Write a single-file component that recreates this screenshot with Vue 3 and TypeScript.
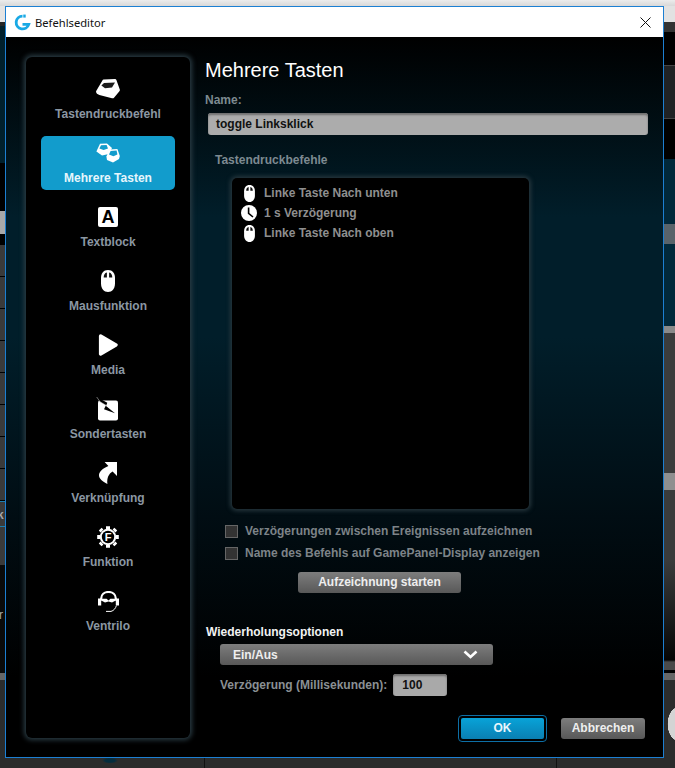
<script setup lang="ts">
type Kind = 'key' | 'multi' | 'text' | 'mouse' | 'play' | 'special' | 'link' | 'gear' | 'head'
interface NavItem { label: string; kind: Kind; active?: boolean }
const nav: NavItem[] = [
  { label: 'Tastendruckbefehl', kind: 'key' },
  { label: 'Mehrere Tasten', kind: 'multi', active: true },
  { label: 'Textblock', kind: 'text' },
  { label: 'Mausfunktion', kind: 'mouse' },
  { label: 'Media', kind: 'play' },
  { label: 'Sondertasten', kind: 'special' },
  { label: 'Verknüpfung', kind: 'link' },
  { label: 'Funktion', kind: 'gear' },
  { label: 'Ventrilo', kind: 'head' },
]
const rows = [
  { label: 'Linke Taste Nach unten', icon: 'mouse' },
  { label: '1 s Verzögerung', icon: 'clock' },
  { label: 'Linke Taste Nach oben', icon: 'mouse' },
]
const checks = ['Verzögerungen zwischen Ereignissen aufzeichnen', 'Name des Befehls auf GamePanel-Display anzeigen']
</script>

<template>
  <div class="stage">
    <span class="behind bk">k</span>
    <span class="behind br">r</span>
    <div class="win">
      <header class="titlebar">
        <svg class="logo" viewBox="0 0 18 18" width="17" height="17">
          <path d="M9 2.2A6.8 6.8 0 1 0 15.6 11H9" fill="none" stroke="#19a9e5" stroke-width="3" />
          <path d="M9.8 .6 H12.4 V3.8 H9.8Z" fill="#19a9e5" />
        </svg>
        <span class="wintitle">Befehlseditor</span>
        <svg class="close" viewBox="0 0 11 11" width="11" height="11">
          <path d="M0.5 0.5 10.5 10.5M10.5 0.5 0.5 10.5" stroke="#111" stroke-width="1" fill="none" />
        </svg>
      </header>

      <div class="content">
        <aside class="side">
          <div v-for="item in nav" :key="item.label" class="nav" :class="{ on: item.active }">
            <div class="ico">
              <svg v-if="item.kind === 'key'" viewBox="0 0 24 20" width="24" height="20">
                <path d="M7.6.6 19 0Q20 0 20.4 1L23.8 10.4Q24.2 11.6 23.2 12.4L18 18.8Q17.2 19.6 16 19.2L3.4 16Q.2 15 0 13Q0 12 .8 11L6.4 1.4Q6.8.7 7.6.6Z" fill="#fff" />
                <path d="M8 4 19 3.6 16 8.6 9 9.2 5.4 6.6Z" fill="#1c1c1c" />
              </svg>
              <svg v-else-if="item.kind === 'multi'" viewBox="0 0 24 20" width="24" height="20">
                <path d="M4 .8 11 .6 16 5 13 11 6 12.4.4 8.6Z" fill="#fff" />
                <path d="M5 2.2 10.6 2 12 5.4 7.6 7 3.4 5.4Z" fill="#129ccc" />
                <path d="M13.6 6.6 21.4 6 23.8 13 23 16 17 19.4 11 17 10.4 13.4Z" fill="#fff" />
                <path d="M14.6 8 20.6 7.6 21.4 11.6 17.4 13.2 13 11.6Z" fill="#129ccc" />
              </svg>
              <div v-else-if="item.kind === 'text'" class="letter">A</div>
              <svg v-else-if="item.kind === 'mouse'" viewBox="0 0 14 22" width="14" height="22">
                <path d="M7 0C11.5 0 14 3.4 14 8V13.5C14 18.6 11 22 7 22S0 18.6 0 13.5V8C0 3.4 2.5 0 7 0Z" fill="#fff" />
                <path d="M5.9 2.6V7.6H2.7C2.7 5 3.7 3 5.9 2.6ZM8.1 2.6C10.3 3 11.3 5 11.3 7.6H8.1Z" fill="#111" />
              </svg>
              <svg v-else-if="item.kind === 'play'" viewBox="0 0 20 22" width="20" height="22">
                <path d="M2.6 2 18 11 2.6 20Z" fill="#fff" stroke="#fff" stroke-width="3.4" stroke-linejoin="round" />
              </svg>
              <svg v-else-if="item.kind === 'special'" viewBox="0 0 24 24" width="24" height="24">
                <rect x="2" y="3.5" width="20" height="20" rx="2" fill="#fff" />
                <path d="M.7 0 11.3 5.7 10 9 19 16.3 8 12.3 10 8.3 4 4.7Z" fill="#000" />
                <path d="M.7 0 4 4.7 10 8.3" fill="none" stroke="#ddd" stroke-width=".5" />
              </svg>
              <svg v-else-if="item.kind === 'link'" viewBox="0 0 18 22" width="18" height="22">
                <path d="M5.6 0H18V14L13.6 9.6C9.6 12 7.8 16 8.4 22 3.4 19.4 0 16.4 0 13.4 0 9.6 3.6 6.4 9.4 4Z" fill="#fff" />
              </svg>
              <svg v-else-if="item.kind === 'gear'" viewBox="0 0 22 22" width="22" height="22">
                <circle cx="11" cy="11" r="8.2" fill="#fff" />
                <path d="M11 3V.2M11 19v2.8M3 11H.2M19 11h2.8M5 5 3.2 3.2M17 5 18.8 3.2M5 17 3.2 18.8M17 17 18.8 18.8" stroke="#fff" stroke-width="4" fill="none" />
                <circle cx="11" cy="11" r="6.2" fill="#000" />
                <text x="11" y="15" text-anchor="middle" class="gear-f">F</text>
              </svg>
              <svg v-else viewBox="0 0 21 21" width="21" height="21">
                <path d="M3.2 9.5V7.6C3.2 3.6 6.2 1 10.5 1S17.8 3.6 17.8 7.6V9.5" fill="none" stroke="#fff" stroke-width="2.2" />
                <path d="M0 7.4H3.2V14.6H0ZM17.8 7.4H21V14.6H17.8Z" fill="#fff" />
                <path d="M3.2 7.8H8.6L10.5 9.4 12.4 7.8H17.8V9.6L14 11.6 10.5 10.4 7 11.6 3.2 9.6Z" fill="#fff" />
                <path d="M18.4 14.6C17.6 17.4 15.8 19.6 13 20.4H8" fill="none" stroke="#fff" stroke-width="1" />
              </svg>
            </div>
            <div class="navlabel">{{ item.label }}</div>
          </div>
        </aside>

        <main class="main">
          <h1 class="h">Mehrere Tasten</h1>
          <div class="name-l">Name:</div>
          <div class="nameinput">toggle Linksklick</div>
          <div class="list-l">Tastendruckbefehle</div>
          <div class="list">
            <div v-for="r in rows" :key="r.label" class="row">
              <span class="rowico">
                <svg v-if="r.icon === 'mouse'" viewBox="0 0 14 22" width="11" height="17">
                  <path d="M7 0C11.5 0 14 3.4 14 8V13.5C14 18.6 11 22 7 22S0 18.6 0 13.5V8C0 3.4 2.5 0 7 0Z" fill="#fff" />
                  <path d="M5.9 2.6V7.6H2.7C2.7 5 3.7 3 5.9 2.6ZM8.1 2.6C10.3 3 11.3 5 11.3 7.6H8.1Z" fill="#111" />
                </svg>
                <svg v-else viewBox="0 0 16 16" width="16" height="16">
                  <circle cx="8" cy="8" r="8" fill="#fff" />
                  <path d="M7.6 2.6V8.4L12 12" fill="none" stroke="#000" stroke-width="1.6" />
                </svg>
              </span>
              <span>{{ r.label }}</span>
            </div>
          </div>
          <label v-for="c in checks" :key="c" class="check">
            <span class="box"></span>
            <span>{{ c }}</span>
          </label>
          <div class="rec btn">Aufzeichnung starten</div>
          <div class="rep-l">Wiederholungsoptionen</div>
          <div class="select">
            <span>Ein/Aus</span>
            <svg viewBox="0 0 15 9" width="15" height="9">
              <path d="M1.5 1.5 7.5 7 13.5 1.5" fill="none" stroke="#fff" stroke-width="2.6" />
            </svg>
          </div>
          <div class="delay">
            <span>Verzögerung (Millisekunden):</span>
            <span class="num">100</span>
          </div>
          <div class="actions">
            <div class="ok"><span>OK</span></div>
            <div class="cancel btn">Abbrechen</div>
          </div>
        </main>
      </div>
    </div>
  </div>
</template>

<style>
html, body { margin: 0; background: #000; }
</style>

<style scoped>
.stage {
  position: relative;
  width: 675px;
  height: 768px;
  box-sizing: border-box;
  padding: 6px 11px 10px 5px;
  overflow: hidden;
  font-family: "Liberation Sans", Arial, sans-serif;
  font-size: 12px;
  background:
    linear-gradient(#ececec, #d8d8d8) 0 0 / 100% 6px no-repeat,
    radial-gradient(ellipse 8px 3px at 50% 50%, #052c3d 60%, transparent 100%) 90px 757px / 40px 7px no-repeat,
    linear-gradient(#111, #111) 204px 757px / 1px 11px no-repeat,
    linear-gradient(#111, #111) 556px 757px / 1px 11px no-repeat,
    linear-gradient(to bottom, #e4e4e4 0 22px, #252525 22px 26px, #01202c 26px 163px, #000 163px 211px, #a9a9a9 211px 234px, #000 234px 245px, transparent 245px, transparent 501px, #1c7fb0 501px 502px, #3a3a3a 502px 526px, #1c7fb0 526px 527px, #3a3a3a 527px 565px, #0a0a0a 565px 673px, #666 673px 680px, #2b2c2c 680px) 0 0 / 5px 100% no-repeat,
    linear-gradient(to bottom, #3a3a3a 0 31px, #000 31px 32px) 0 245px / 5px 32px repeat-y,
    radial-gradient(ellipse 16px 24px at 16px 24px, #d4d4d4 70%, transparent 72%) 663px 700px / 16px 48px no-repeat,
    linear-gradient(to bottom, #e2e2e2 0 22px, #333 22px 32px, #000 32px 65px, #444 65px 66px, #202224 66px 118px, #444 118px 119px, #000 119px 159px, #01283a 159px 224px, #59636a 224px 244px, #01283a 244px 326px, #8a8a8a 326px 333px, #3b3c3c 333px 473px, #8f8f8f 473px 490px, #3a3b3b 490px 560px, #050505 660px, #4a4a4a 662px 670px, #000 670px 673px, #666 673px 680px, #2b2c2c 680px) 663px 0 / 12px 100% no-repeat,
    #2b2c2c;
}
.behind {
  position: absolute;
  left: -3px;
  font-weight: 700;
  color: #a8a8a8;
  line-height: 14px;
}
.bk { top: 508px; }
.br { top: 608px; left: -1px; font-weight: 400; }
.win {
  position: relative;
  width: 100%;
  height: 100%;
  box-sizing: border-box;
  border: 1px solid #1c7fd2;
  display: flex;
  flex-direction: column;
  background: #000;
}
.titlebar {
  height: 30px;
  flex: none;
  background: #fff;
  display: flex;
  align-items: center;
  padding: 0 12px 0 8px;
  box-sizing: border-box;
}
.logo { margin-right: 4px; }
.wintitle { font-family: "Noto Sans", "Liberation Sans", sans-serif; font-size: 11.2px; color: #111; }
.close { margin-left: auto; }
.content {
  flex: 1;
  display: flex;
  padding: 20px 0 0 20px;
  background: linear-gradient(to bottom, #000 0, #011e2a 180px, #011e2a 300px, #010d13 480px, #000 640px);
}
.side {
  width: 164px;
  height: 681px;
  box-sizing: border-box;
  flex: none;
  background: #000;
  border-radius: 6px;
  box-shadow: 0 0 5px 2px #2a3c44;
  padding: 15px 15px 0;
  display: flex;
  flex-direction: column;
  gap: 10px;
}
.nav {
  height: 54px;
  flex: none;
  padding-top: 5px;
  box-sizing: border-box;
  border-radius: 5px;
  text-align: center;
}
.nav.on { background: #129ccc; }
.ico { height: 24px; display: flex; align-items: center; justify-content: center; }
.navlabel {
  margin-top: 6px;
  line-height: 14px;
  font-weight: 700;
  color: #8b97a3;
}
.nav.on .navlabel { color: #e6f6fc; }
.letter {
  width: 20px;
  height: 20px;
  border-radius: 2px;
  background: #fff;
  color: #000;
  font-size: 18px;
  font-weight: 700;
  line-height: 20px;
  text-align: center;
}
.gear-f { font: 700 11px "Liberation Sans", sans-serif; fill: #fff; }
.main {
  flex: 1;
  padding-left: 15px;
  min-width: 0;
  color: #8d9296;
  font-weight: 700;
}
.h {
  margin: 0;
  font-size: 20px;
  font-weight: 400;
  line-height: 24px;
  padding-top: 1px;
  color: #fff;
}
.name-l { margin-top: 11px; line-height: 14px; color: #7d8a91; }
.nameinput {
  margin: 6px 0 0 3px;
  width: 440px;
  height: 22px;
  line-height: 23px;
  box-sizing: border-box;
  padding-left: 8px;
  border-radius: 3px;
  background: #acacac;
  box-shadow: inset 0 2px 2px #6f6f6f;
  color: #111;
}
.list-l { margin: 18px 0 0 10px; line-height: 14px; color: #7d8a91; }
.list {
  margin: 11px 0 0 27px;
  width: 297px;
  height: 331px;
  box-sizing: border-box;
  background: #000;
  border-radius: 5px;
  box-shadow: 0 0 4px 2px #26363d;
  padding-top: 5px;
}
.row { display: flex; align-items: center; height: 20px; color: #8f8f8f; }
.rowico { width: 16px; margin: 0 7px 0 9px; display: flex; justify-content: center; }
.check {
  display: flex;
  align-items: center;
  height: 22px;
  margin-left: 20px;
  color: #7d8388;
}
.check:first-of-type { margin-top: 11px; }
.box {
  width: 13px;
  height: 13px;
  box-sizing: border-box;
  margin-right: 7px;
  background: #333;
  border: 1px solid #666;
}
.btn {
  color: #eee;
  background: linear-gradient(#7d7d7d, #585858);
  border-radius: 3px;
  text-align: center;
}
.rec { margin: 8px 0 0 93px; width: 163px; height: 21px; line-height: 21px; }
.rep-l { margin-top: 32px; margin-left: 1px; line-height: 14px; color: #f2f2f2; }
.select {
  margin: 5px 0 0 15px;
  width: 273px;
  height: 21px;
  box-sizing: border-box;
  padding: 0 15px 0 13px;
  display: flex;
  align-items: center;
  justify-content: space-between;
  color: #eee;
  border-radius: 3px;
  background: linear-gradient(#7d7d7d, #585858);
}
.delay { display: flex; align-items: center; margin: 9px 0 0 15px; height: 22px; color: #8a9094; }
.num {
  margin-left: 6px;
  width: 54px;
  height: 22px;
  line-height: 23px;
  padding-left: 9px;
  box-sizing: border-box;
  border-radius: 3px;
  background: #a9a9a9;
  box-shadow: inset 0 2px 2px #6f6f6f;
  color: #111;
}
.actions { display: flex; align-items: center; margin: 19px 0 0 253px; }
.ok {
  width: 89px;
  height: 27px;
  box-sizing: border-box;
  border: 1px solid #0d6fa6;
  border-radius: 4px;
  padding: 2px;
  background: #000;
}
.ok span {
  display: block;
  height: 21px;
  line-height: 21px;
  border-radius: 2px;
  background: linear-gradient(#08a3d8, #0a7fb2);
  color: #e8f6fc;
  text-align: center;
}
.cancel { margin-left: 14px; width: 84px; height: 21px; line-height: 21px; }
</style>
